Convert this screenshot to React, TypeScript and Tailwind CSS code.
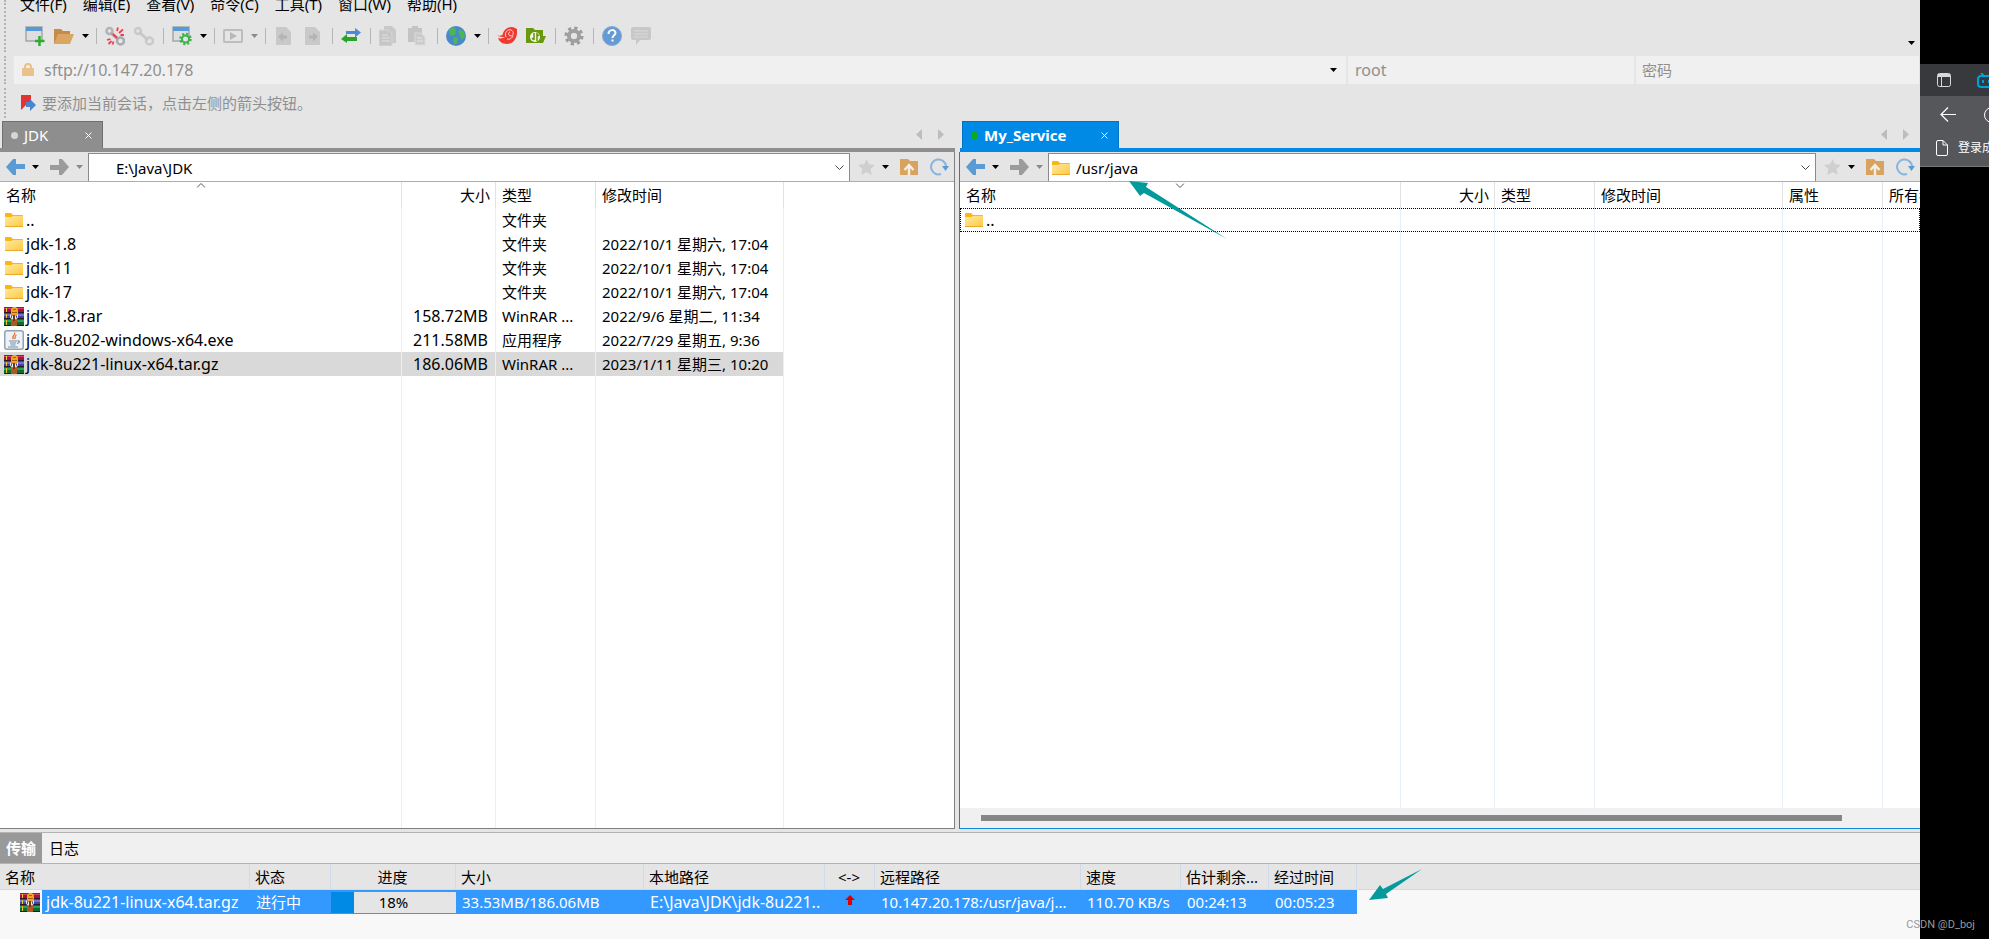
import type { ReactNode } from 'react';

type FileRow = {
  icon: 'folder' | 'rar' | 'java';
  name: string;
  size: string;
  type: string;
  date: string;
  selected?: boolean;
};

const menus = ['文件(F)', '编辑(E)', '查看(V)', '命令(C)', '工具(T)', '窗口(W)', '帮助(H)'];

const localFiles: FileRow[] = [
  { icon: 'folder', name: '..', size: '', type: '文件夹', date: '' },
  { icon: 'folder', name: 'jdk-1.8', size: '', type: '文件夹', date: '2022/10/1 星期六, 17:04' },
  { icon: 'folder', name: 'jdk-11', size: '', type: '文件夹', date: '2022/10/1 星期六, 17:04' },
  { icon: 'folder', name: 'jdk-17', size: '', type: '文件夹', date: '2022/10/1 星期六, 17:04' },
  { icon: 'rar', name: 'jdk-1.8.rar', size: '158.72MB', type: 'WinRAR ...', date: '2022/9/6 星期二, 11:34' },
  { icon: 'java', name: 'jdk-8u202-windows-x64.exe', size: '211.58MB', type: '应用程序', date: '2022/7/29 星期五, 9:36' },
  { icon: 'rar', name: 'jdk-8u221-linux-x64.tar.gz', size: '186.06MB', type: 'WinRAR ...', date: '2023/1/11 星期三, 10:20', selected: true },
];

const transfer = {
  name: 'jdk-8u221-linux-x64.tar.gz',
  status: '进行中',
  percent: 18,
  size: '33.53MB/186.06MB',
  local: 'E:\\Java\\JDK\\jdk-8u221..',
  remote: '10.147.20.178:/usr/java/j...',
  speed: '110.70 KB/s',
  left: '00:24:13',
  elapsed: '00:05:23',
};

function Folder() {
  return (
    <svg width="18" height="14" viewBox="0 0 18 14" className="shrink-0">
      <defs>
        <linearGradient id="folderFill" x1="0" y1="0" x2="1" y2="1">
          <stop offset="0" stopColor="#ffe9a2" />
          <stop offset="1" stopColor="#fdc93f" />
        </linearGradient>
      </defs>
      <path d="M0 1a1 1 0 0 1 1-1h5l2 2h9a1 1 0 0 1 1 1v2H0z" fill="#f9b616" />
      <path d="M0 4h6l2-1h10v10a1 1 0 0 1-1 1H1a1 1 0 0 1-1-1z" fill="url(#folderFill)" />
      <path d="M0 13.500h18" stroke="#eaa92a" />
    </svg>
  );
}

function Rar() {
  return (
    <svg width="20" height="19" viewBox="0 0 20 19" className="shrink-0">
      <path d="M0 0h20v6H0z" fill="#a90f3d" />
      <path d="M0 1h20v1H0z" fill="#d6436d" />
      <path d="M0 6h20v6H0z" fill="#4144a0" />
      <path d="M0 7h20v2H0z" fill="#7474cf" />
      <path d="M0 12h20v7H0z" fill="#0c6c31" />
      <path d="M0 13h20v2H0z" fill="#28a05a" />
      <path d="M0 5.500h20M0 11.500h20M0 18.500h20" stroke="#29172a" />
      <path d="M2.500 1v4M2.500 7v4M2.500 13v5" stroke="#eec32b" />
      <path d="M7 12h6v7H7z" fill="#b5561f" />
      <path d="M7 2l2-2h3l2 2v5l-2 2H9L7 7z" fill="#f0a422" />
      <path d="M9 2.500h3M8 5.500h5" stroke="#a75a10" />
      <path d="M6.500 7.500V10q0 2 2 2V9M13.500 7.500V10q0 2-2 2V9" fill="none" stroke="#e9e9e9" />
      <path d="M9 8h2v6H9z" fill="#6b3a1c" />
    </svg>
  );
}

function JavaFile() {
  return (
    <svg width="20" height="20" viewBox="0 0 20 20" fill="none" className="shrink-0">
      <rect x=".75" y=".75" width="18.500" height="18.500" rx="2" fill="#eef2f5" stroke="#8fa3b2" strokeWidth="1.500" />
      <path d="M10.500 2.500c2 2.500-4 3.500-1 6.500M12.500 5c-3 1.500 0 2-2 4" stroke="#e5733b" strokeWidth="1.300" />
      <path d="M5 11h8M6 13h6M6.500 15h5M13.500 11c3-.5 2 2-.5 2.500M4 17h10" stroke="#6e8fa8" strokeWidth="1.200" />
    </svg>
  );
}

function FileIcon({ icon }: { icon: FileRow['icon'] }) {
  if (icon === 'folder') return <span className="flex w-5 justify-center"><Folder /></span>;
  return icon === 'rar' ? <Rar /> : <JavaFile />;
}

function Caret({ label, muted }: { label: string; muted?: boolean }) {
  return (
    <button aria-label={label} className="flex w-[5px] shrink-0 justify-center">
      <svg width="7" height="4" viewBox="0 0 7 4" className="shrink-0">
        <path d="M0 0h7L3.500 4z" fill={muted ? '#8a8a8a' : '#000'} />
      </svg>
    </button>
  );
}

function Tool({ label, children }: { label: string; children: ReactNode }) {
  return (
    <button aria-label={label} className="w-[21px] shrink-0">
      <svg width="20" height="20" viewBox="0 0 20 20" fill="none">{children}</svg>
    </button>
  );
}

function Sep() {
  return <span className="h-4 w-px shrink-0 bg-[#b5b5b5]" />;
}

function Toolbar() {
  return (
    <div className="flex h-10 items-center gap-2 pl-[25px] pr-[6px]">
      <Tool label="新建会话">
        <path d="M1 1h16v14H1z" fill="#dedede" stroke="#a2a8ac" strokeWidth="1.500" />
        <path d="M1 1h16v4H1z" fill="#569bd8" />
        <path d="M14.500 10v10M10 15h9.500" stroke="#2bad2b" strokeWidth="2.500" />
      </Tool>
      <Tool label="打开">
        <path d="M0 3h7l2 2h7v4H4L1 17H0z" fill="#c48b4c" />
        <path d="M4 8h16l-4 10H0z" fill="#dba562" />
      </Tool>
      <Caret label="打开选项" />
      <Sep />
      <Tool label="断开">
        <circle cx="4.500" cy="5" r="3" stroke="#b2b4b6" strokeWidth="2.500" />
        <circle cx="15.500" cy="15" r="3.500" stroke="#a9abae" strokeWidth="2.500" />
        <path d="M6 7l7 6" stroke="#a9abae" strokeWidth="3" />
        <path d="M8 8l4 4M12 5l1-3.500M14 7l4-3.500M15.500 9h3.500M2 14l3.500-1M3.500 18l3-3M7.500 18.500l1-3" stroke="#ee3e4b" strokeWidth="1.800" />
      </Tool>
      <Tool label="重新连接">
        <circle cx="4" cy="5" r="3" stroke="#cacaca" strokeWidth="2.500" />
        <circle cx="15.500" cy="15" r="3.500" stroke="#cacaca" strokeWidth="2.500" />
        <path d="M5 6l9 8" stroke="#c8c8c8" strokeWidth="3" />
      </Tool>
      <Sep />
      <Tool label="会话属性">
        <path d="M1 1h16v14H1z" fill="#dedede" stroke="#a2a8ac" strokeWidth="1.500" />
        <path d="M1 1h16v4H1z" fill="#569bd8" />
        <circle cx="13.500" cy="13" r="5" stroke="#3bb34a" strokeWidth="2.500" strokeDasharray="2 1.927" />
        <circle cx="13.500" cy="13" r="3.500" fill="#e5e5e5" stroke="#3bb34a" strokeWidth="2" />
      </Tool>
      <Caret label="会话属性选项" />
      <Sep />
      <Tool label="运行">
        <rect x="1" y="4" width="18" height="12" rx="1" stroke="#bdbdbd" strokeWidth="2" />
        <path d="M7 6l7 4-7 4z" fill="#b8b8b8" />
      </Tool>
      <Caret label="运行选项" muted />
      <Sep />
      <Tool label="上传文件">
        <path d="M2 1h10l5 5v13H2z" fill="#c9c9c9" />
        <path d="M4 10.500l5-4v3h4v3H9v3z" fill="#b4b4b4" />
      </Tool>
      <Tool label="下载文件">
        <path d="M2 1h10l5 5v13H2z" fill="#c9c9c9" />
        <path d="M15 10.500l-5-4v3H6v3h4v3z" fill="#b4b4b4" />
      </Tool>
      <Sep />
      <Tool label="同步">
        <path d="M5 5h9V2l6 4.500-6 5V8H5z" fill="#4c8bd3" />
        <path d="M16 11H6V8l-6 5 6 4v-2h10z" fill="#2aa32a" />
      </Tool>
      <Sep />
      <Tool label="复制">
        <path d="M5 0h8l4 4v13H5z" fill="#c9c9c9" />
        <path d="M0 4h9l4 4v12H0z" fill="#c6c6c6" stroke="#d6d6d6" />
        <path d="M3 9h6M3 12h8M3 15h8" stroke="#d8d8d8" strokeWidth="1.500" />
      </Tool>
      <Tool label="粘贴">
        <path d="M0 2h4V0h6v2h4v14H0z" fill="#c4c4c4" />
        <path d="M7 7h6l4 4v8H7z" fill="#cbcbcb" stroke="#dcdcdc" />
        <path d="M9 12h5M9 15h6" stroke="#dedede" strokeWidth="1.500" />
      </Tool>
      <Sep />
      <Tool label="浏览器">
        <circle cx="10" cy="10" r="10" fill="#4b87cd" />
        <path d="M3 3l5-2 2 3-1 5-4 1-2-3zM8 11l4 1-1 5-2 2-2-4zM14 3l4 3 1 5-3 3-2-4-2-4z" fill="#48b855" />
      </Tool>
      <Caret label="浏览器选项" />
      <Sep />
      <Tool label="Xshell">
        <path d="M0 9c4 2 6 0 6-2C8 1 15 0 18 2l2 1c1 8-3 15-10 15-5 0-8-3-9-6 3 1 5 0 7-1-3 0-6 0-8-2z" fill="#f03a30" />
        <path d="M9 11c-2-5 2-8 5-7s3 6 0 6-3-4-1-4M10 13c3 1 5-1 6-3" stroke="#f7d8d4" />
      </Tool>
      <Tool label="Xftp">
        <path d="M0 2h7l2 2h8v6h3l-3 7H0z" fill="#69980f" />
        <circle cx="9" cy="11" r="5" fill="#f4f8ec" />
        <path d="M8 7v7M6 12l2 2M11 15V8l2 2" stroke="#69980f" strokeWidth="1.600" />
      </Tool>
      <Sep />
      <Tool label="选项">
        <circle cx="10" cy="10" r="7.500" stroke="#9b9b9b" strokeWidth="4" strokeDasharray="3 2.890" />
        <circle cx="10" cy="10" r="5" stroke="#a0a0a0" strokeWidth="4" />
        <circle cx="10" cy="10" r="3" fill="#e5e5e5" />
      </Tool>
      <Sep />
      <Tool label="帮助">
        <circle cx="10" cy="10" r="9.500" fill="#659bd4" stroke="#83a9cf" />
        <path d="M6.500 8c0-5 7-5 7-1 0 2-3 2.500-3 5M10.500 13.500v2" stroke="#fff" strokeWidth="2" />
      </Tool>
      <Tool label="反馈">
        <path d="M2 1h16a2 2 0 0 1 2 2v9a2 2 0 0 1-2 2H9l-4 5v-5H2a2 2 0 0 1-2-2V3a2 2 0 0 1 2-2z" fill="#c8c8c8" />
        <path d="M3 5h14M3 8h14M3 11h14" stroke="#dadada" />
      </Tool>
      <span className="ml-auto pt-3.5"><Caret label="更多按钮" /></span>
    </div>
  );
}

function AddressBar() {
  return (
    <div className="flex h-7 gap-0.5 pl-3.5 pr-px text-[#8f8f8f]">
      <div className="flex flex-1 items-center bg-[#f0f0f0] pl-2 pr-[10px]">
        <svg width="12" height="14" viewBox="0 0 12 14" fill="none">
          <path d="M3 7V4a3 3 0 0 1 6 0v3" stroke="#e9c18a" strokeWidth="2" />
          <rect y="5" width="12" height="8" rx="1" fill="#e9c18a" />
        </svg>
        <input aria-label="地址" defaultValue="sftp://10.147.20.178" className="ml-2.5 min-w-0 flex-1 bg-transparent text-base leading-5 outline-none" />
        <Caret label="历史地址" />
      </div>
      <input aria-label="用户名" placeholder="root" className="w-[286px] bg-[#f0f0f0] px-[7px] text-base leading-5 outline-none placeholder:text-[#8f8f8f]" />
      <input aria-label="密码" type="password" placeholder="密码" className="w-[283px] bg-[#f0f0f0] px-1.5 outline-none placeholder:text-[#8f8f8f]" />
    </div>
  );
}

function Arrow({ flip }: { flip?: boolean }) {
  return (
    <svg width="19" height="16" viewBox="0 0 19 16" className={flip ? 'rotate-180' : ''}>
      <path d="M0 8l7-8h3v5h9v5h-9v6H7z" fill={flip ? '#9b9b9b' : '#5b9bd5'} />
    </svg>
  );
}

function TabStrip({ title, active }: { title: string; active?: boolean }) {
  return (
    <div
      className={`flex h-[31px] items-end justify-between border-b-4 pl-0.5 pr-[11px] ${
        active ? 'border-[#008ae5]' : 'border-[#8e8e8e]'
      }`}
    >
      <div
        className={`flex h-[27px] items-center border border-b-0 pl-2 pr-2.5 text-white ${
          active ? 'w-[157px] border-[#0074c4] bg-[#008ae5] font-bold' : 'w-[101px] border-[#6f6f6f] bg-[#8e8e8e]'
        }`}
      >
        <span className={`mr-1.5 size-[7px] rounded-full ${active ? 'bg-[#0fae0f]' : 'bg-[#d6d6d6]'}`} />
        <span className="flex-1">{title}</span>
        <button aria-label={`关闭 ${title}`}>
          <svg width="7" height="7" viewBox="0 0 7 7" stroke="#fff"><path d="M.5.5l6 6M6.500.5l-6 6" /></svg>
        </button>
      </div>
      <div className="flex h-[27px] items-center gap-4">
        <button aria-label="上一个标签">
          <svg width="6" height="11" viewBox="0 0 6 11"><path d="M6 0v11L0 5.500z" fill="#bdbdbd" /></svg>
        </button>
        <button aria-label="下一个标签">
          <svg width="6" height="11" viewBox="0 0 6 11"><path d="M0 0v11l6-5.500z" fill="#bdbdbd" /></svg>
        </button>
      </div>
    </div>
  );
}

function PathBar({ path, folder }: { path: string; folder?: boolean }) {
  return (
    <div className="flex h-[30px] items-center border-b border-[#adadad] pl-1.5 pr-[5px]">
      <button aria-label="后退"><Arrow /></button>
      <span className="ml-2 flex"><Caret label="后退历史" /></span>
      <button aria-label="前进" className="ml-3"><Arrow flip /></button>
      <span className="ml-2 flex"><Caret label="前进历史" muted /></span>
      <div className="ml-1.5 mt-px flex h-7 flex-1 items-center border border-b-0 border-[#8a8a8a] bg-white pl-[3px] pr-[5px]">
        <span className="w-[18px]">{folder && <Folder />}</span>
        <input
          aria-label="路径"
          defaultValue={path}
          className="ml-1.5 min-w-0 flex-1 bg-transparent outline-none"
        />
        <button aria-label="路径历史">
          <svg width="9" height="6" viewBox="0 0 9 6" fill="none" stroke="#444"><path d="M.5.5l4 4 4-4" /></svg>
        </button>
      </div>
      <button aria-label="收藏" className="ml-2">
        <svg width="17" height="16" viewBox="0 0 17 16">
          <path d="M8.500 0l2.500 5.200 6 .8-4.400 4 1.100 6-5.200-3-5.200 3 1.100-6L0 6l6-.8z" fill="#cfcfcf" />
        </svg>
      </button>
      <span className="ml-2 flex"><Caret label="收藏夹" /></span>
      <button aria-label="上级目录" className="ml-3">
        <svg width="18" height="17" viewBox="0 0 18 17" fill="none">
          <path d="M0 1h8l2 2h8v14H0z" fill="#d9a25d" />
          <path d="M9 17V8M4.500 12L9 7l4.500 5" stroke="#f2eee8" strokeWidth="2.500" />
        </svg>
      </button>
      <button aria-label="刷新" className="ml-3">
        <svg width="19" height="18" viewBox="0 0 19 18" fill="none">
          <path d="M11 16A7.500 7.500 0 1 1 16 8" stroke="#86b5e0" strokeWidth="2" />
          <path d="M12 8h7l-3.500 5z" fill="#5b9bd5" />
        </svg>
      </button>
    </div>
  );
}

const th = 'h-[26px] border-r border-[#e2e2e2] p-0 font-normal';
const td = 'h-6 border-r border-[#e8effa] p-0 whitespace-nowrap';

function SortMark({ down }: { down?: boolean }) {
  return (
    <svg width="9" height="5" viewBox="0 0 9 5" fill="none" stroke="#555" className="absolute left-1/2 top-px -translate-x-1/2">
      <path d={down ? 'M.5.5l4 4 4-4' : 'M.5 4.500l4-4 4 4'} />
    </svg>
  );
}

function LocalPane() {
  return (
    <section className="flex min-w-0 flex-[955] flex-col">
      <TabStrip title="JDK" />
      <div className="flex min-h-0 flex-1 flex-col border-b border-r border-[#7f7f7f]">
        <PathBar path="E:\Java\JDK" />
        <div className="min-h-0 flex-1 overflow-hidden bg-white">
          <table className="h-full w-full table-fixed border-separate border-spacing-0">
            <thead>
              <tr className="h-[26px]">
                <th className={`${th} relative w-[402px] pl-1.5 text-left`}>名称<SortMark /></th>
                <th className={`${th} w-[94px] pr-[5px] text-right`}>大小</th>
                <th className={`${th} w-[100px] pl-1.5 text-left`}>类型</th>
                <th className={`${th} w-[188px] pl-1.5 text-left`}>修改时间</th>
                <td />
              </tr>
            </thead>
            <tbody>
              {localFiles.map((file) => (
                <tr key={file.name} className="h-6">
                  <td className={`${td} ${file.selected ? 'bg-[#d9d9d9]' : ''}`}>
                    <div className="flex items-center gap-0.5 pl-1 text-base leading-5">
                      <FileIcon icon={file.icon} />
                      {file.name}
                    </div>
                  </td>
                  <td className={`${td} pr-[7px] text-right text-base leading-5 ${file.selected ? 'bg-[#d9d9d9]' : ''}`}>{file.size}</td>
                  <td className={`${td} pl-1.5 ${file.selected ? 'bg-[#d9d9d9]' : ''}`}>{file.type}</td>
                  <td className={`${td} pl-1.5 ${file.selected ? 'bg-[#d9d9d9]' : ''}`}>{file.date}</td>
                  <td />
                </tr>
              ))}
              {/* empty row keeps the column lines going to the bottom */}
              <tr className="h-full">
                <td className={td} />
                <td className={td} />
                <td className={td} />
                <td className={td} />
                <td />
              </tr>
            </tbody>
          </table>
        </div>
      </div>
    </section>
  );
}

function RemotePane() {
  return (
    <section className="relative flex min-w-0 flex-[961] flex-col">
      <div className="pl-px"><TabStrip title="My_Service" active /></div>
      <div className="flex min-h-0 flex-1 flex-col border-b border-l border-[#0f86d8]">
        <PathBar path="/usr/java" folder />
        <div className="relative min-h-0 flex-1 overflow-hidden bg-white">
          <table className="h-full w-full table-fixed border-separate border-spacing-0">
            <thead>
              <tr className="h-[26px]">
                <th className={`${th} relative w-[441px] pl-1.5 text-left`}>名称<SortMark down /></th>
                <th className={`${th} w-[94px] pr-[5px] text-right`}>大小</th>
                <th className={`${th} w-[100px] pl-1.5 text-left`}>类型</th>
                <th className={`${th} w-[188px] pl-1.5 text-left`}>修改时间</th>
                <th className={`${th} w-[100px] pl-1.5 text-left`}>属性</th>
                <th className="overflow-hidden whitespace-nowrap p-0 pl-1.5 text-left font-normal">所有者</th>
              </tr>
            </thead>
            <tbody>
              <tr className="h-6 outline-1 -outline-offset-1 outline-dotted outline-black">
                <td className={td}>
                  <div className="flex items-center gap-0.5 pl-1 text-base leading-5"><FileIcon icon="folder" />..</div>
                </td>
                <td className={td} />
                <td className={td} />
                <td className={td} />
                <td className={td} />
                <td />
              </tr>
              <tr className="h-full">
                <td className={td} />
                <td className={td} />
                <td className={td} />
                <td className={td} />
                <td className={td} />
                <td />
              </tr>
            </tbody>
          </table>
        </div>
        <div className="flex h-5 items-center bg-[#f0f0f0] pl-[21px] pr-[78px]">
          <div className="h-1.5 w-full bg-[#868686]" />
        </div>
      </div>
      <svg width="98" height="58" viewBox="0 0 98 58" className="absolute left-[170px] top-[60px]">
        <path d="M0 0l19 2-2 4 81 52-83-46-4 3z" fill="#049a9b" />
      </svg>
    </section>
  );
}

const qh = 'h-[26px] border-b border-r border-[#cfdbea] p-0 pl-[5px] text-left font-normal whitespace-nowrap';
const qd = 'h-6 bg-[#3399ff] p-0 pl-1.5 whitespace-nowrap';

function TransferPanel() {
  return (
    <section className="relative mt-[3px] border-t border-[#b4b4b4]">
      <div className="flex h-[31px] border-b border-[#b4b4b4] bg-[#f0f0f0]">
        <button className="w-[42px] bg-[#999] font-bold text-white">传输</button>
        <button className="px-[7px]">日志</button>
      </div>
      <div className="h-[75px] bg-[#f8f8f8]">
        <table className="w-full table-fixed border-separate border-spacing-0">
          <thead className="bg-[#e5e5e5]">
            <tr>
              <th className={`${qh} w-[250px]`}>名称</th>
              <th className={`${qh} w-[81px]`}>状态</th>
              <th className={`${qh} w-[125px]`}><div className="pr-1.5 text-center">进度</div></th>
              <th className={`${qh} w-[188px]`}>大小</th>
              <th className={`${qh} w-[181px]`}>本地路径</th>
              <th className={`${qh} w-[50px]`}><div className="pr-1.5 text-center">&lt;-&gt;</div></th>
              <th className={`${qh} w-[206px]`}>远程路径</th>
              <th className={`${qh} w-[100px]`}>速度</th>
              <th className={`${qh} w-[88px]`}>估计剩余...</th>
              <th className={`${qh} w-[88px]`}>经过时间</th>
              <td className="border-b border-[#cfdbea]" />
            </tr>
          </thead>
          <tbody>
            <tr className="text-white">
              <td className="h-6 p-0">
                <div className="flex h-6 items-center pl-5">
                  <Rar />
                  <span className="ml-0.5 flex-1 bg-[#3399ff] pl-1 text-base leading-6">{transfer.name}</span>
                </div>
              </td>
              <td className={qd}>{transfer.status}</td>
              <td className="bg-[#3399ff] p-0">
                <div
                  role="progressbar"
                  aria-label="进度"
                  aria-valuenow={transfer.percent}
                  className="relative h-[21px] bg-[#e5e5e5] text-center leading-5 text-black"
                >
                  <div className="absolute inset-y-0 left-0 bg-[#008ae5]" style={{ width: `${transfer.percent}%` }} />
                  {transfer.percent}%
                </div>
              </td>
              <td className={qd}>{transfer.size}</td>
              <td className={`${qd} text-base leading-5`}>{transfer.local}</td>
              <td className="bg-[#3399ff] p-0">
                <svg width="10" height="10" viewBox="0 0 10 10" className="mx-auto mb-1">
                  <path d="M5 0l5 5H7v5H3V5H0z" fill="#d80000" />
                </svg>
              </td>
              <td className={qd}>{transfer.remote}</td>
              <td className={qd}>{transfer.speed}</td>
              <td className={qd}>{transfer.left}</td>
              <td className={qd}>{transfer.elapsed}</td>
              <td />
            </tr>
          </tbody>
        </table>
      </div>
      <svg width="54" height="32" viewBox="0 0 54 32" className="absolute left-[1369px] top-9">
        <path d="M0 31l19-2-2-4L53 0 14 20l-3-4z" fill="#049a9b" />
      </svg>
    </section>
  );
}

// the strip of the browser window that shows beside the client
function BrowserEdge() {
  return (
    <aside className="w-[69px] shrink-0 overflow-hidden bg-black pt-16 text-white">
      <div className="flex h-8 items-center bg-[#38393c] pl-[17px]">
        <button aria-label="标签页">
          <svg width="14" height="14" viewBox="0 0 14 14" fill="none" stroke="#d8d8d8">
            <rect x=".5" y=".5" width="13" height="13" rx="2" />
            <path d="M1 2.500h12" strokeWidth="3" />
            <path d="M4.500 4v9" />
          </svg>
        </button>
        <span className="ml-4 h-5 w-px bg-[#77787a]" />
        <svg width="20" height="15" viewBox="0 0 20 15" fill="none" stroke="#00a1d6" strokeWidth="2" className="ml-2.5 shrink-0">
          <rect x="1" y="3" width="18" height="11" rx="3" />
          <path d="M4 0l3 3M16 0l-3 3M6 7v3M12 7v3" />
        </svg>
      </div>
      <div className="h-[71px] border-b border-[#77787a] bg-[#56575b]">
        <div className="flex h-[37px] items-center pl-5">
          <button aria-label="返回">
            <svg width="16" height="15" viewBox="0 0 16 15" fill="none" stroke="#fff" strokeWidth="1.200">
              <path d="M16 7.500H1M8 .5l-7 7 7 7" />
            </svg>
          </button>
          <svg width="16" height="16" viewBox="0 0 16 16" fill="none" stroke="#fff" className="ml-7 shrink-0">
            <circle cx="8" cy="8" r="7.500" />
          </svg>
        </div>
        <a href="#" className="flex items-center gap-2.5 whitespace-nowrap pl-4 pt-[7px] text-xs">
          <svg width="12" height="16" viewBox="0 0 12 16" fill="none" stroke="#fff" className="shrink-0">
            <path d="M.5 2a1.500 1.500 0 0 1 1.500-1.500h5l4.500 4.500v9a1.500 1.500 0 0 1-1.500 1.500H2A1.500 1.500 0 0 1 .5 14zM7 .5V5h4.500" />
          </svg>
          登录成功
        </a>
      </div>
    </aside>
  );
}

export default function App() {
  return (
    <div className="relative flex h-screen overflow-hidden bg-[#e5e5e5] font-['Noto_Sans','Noto_Sans_CJK_SC',sans-serif] text-[15px] leading-5 text-black">
      <main className="flex min-w-0 flex-1 flex-col overflow-hidden">
        <header className="relative">
          <div className="absolute inset-y-0 left-1 flex flex-col gap-1 pb-0.5">
            <span className="h-[52px] border-l-2 border-dotted border-[#b4b4b4]" />
            <span className="h-7 border-l-2 border-dotted border-[#b4b4b4]" />
            <span className="h-[30px] border-l-2 border-dotted border-[#b4b4b4]" />
          </div>
          <nav className="-mt-1.5 flex h-[22px] gap-4 pl-5">
            {menus.map((menu) => (
              <button key={menu} className="h-5 whitespace-nowrap">{menu}</button>
            ))}
          </nav>
          <Toolbar />
          <AddressBar />
          <div className="flex h-[37px] items-center gap-1.5 pl-[21px] text-[#8f8f8f]">
            <svg width="15" height="16" viewBox="0 0 15 16">
              <path d="M0 0h10v8l-5 2-5 5z" fill="#e23434" />
              <path d="M5 7h4V4l6 6-6 6v-4H5z" fill="#4a86cf" />
            </svg>
            要添加当前会话，点击左侧的箭头按钮。
          </div>
        </header>
        <div className="flex min-h-0 flex-1 gap-1">
          <LocalPane />
          <RemotePane />
        </div>
        <TransferPanel />
      </main>
      <BrowserEdge />
      <span className="absolute bottom-1.5 right-3.5 font-['Roboto',sans-serif] text-[11px] leading-4 text-[#989898]">CSDN @D_boj</span>
    </div>
  );
}
